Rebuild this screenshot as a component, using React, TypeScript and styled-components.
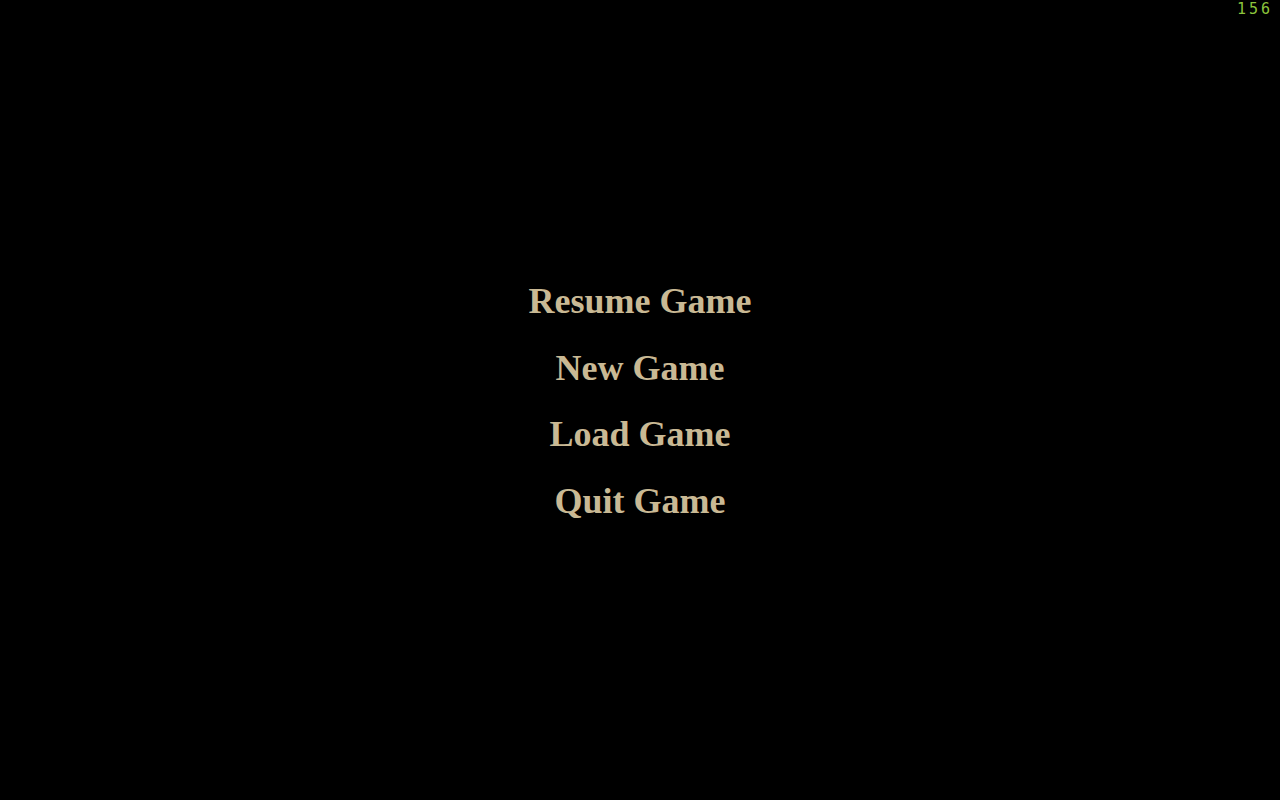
import React from 'react';
import styled, { createGlobalStyle } from 'styled-components';

const menuTextColor = '#c9b994';
const fpsColor = '#8cc43c';

const GlobalStyle = createGlobalStyle`
  html, body {
    margin: 0;
    padding: 0;
    background: #000;
  }
`;

const Screen = styled.div`
  position: relative;
  box-sizing: border-box;
  width: 100vw;
  height: 100vh;
  padding-top: 2px;
  background: #000;
  display: flex;
  align-items: center;
  justify-content: center;
  overflow: hidden;
`;

// frame rate readout pinned in the top right corner
const FpsCounter = styled.div`
  position: absolute;
  top: 1px;
  right: 7px;
  font-family: 'DejaVu Sans Mono', monospace;
  font-size: 15px;
  line-height: 16px;
  letter-spacing: 3px;
  color: ${fpsColor};
`;

const Menu = styled.nav`
  display: flex;
  flex-direction: column;
  align-items: center;
  gap: 30.5px;
`;

const MenuItem = styled.button`
  background: none;
  border: none;
  padding: 0;
  margin: 0;
  font-family: 'Liberation Serif', 'Times New Roman', serif;
  font-weight: bold;
  font-size: 36px;
  line-height: 36px;
  color: ${menuTextColor};
  cursor: pointer;
`;

const items = ['Resume Game', 'New Game', 'Load Game', 'Quit Game'];

const App = () => {
  return (
    <>
      <GlobalStyle />
      <Screen>
        <FpsCounter>156</FpsCounter>
        <Menu>
          {items.map((label) => (
            <MenuItem key={label}>{label}</MenuItem>
          ))}
        </Menu>
      </Screen>
    </>
  );
};

export default App;
